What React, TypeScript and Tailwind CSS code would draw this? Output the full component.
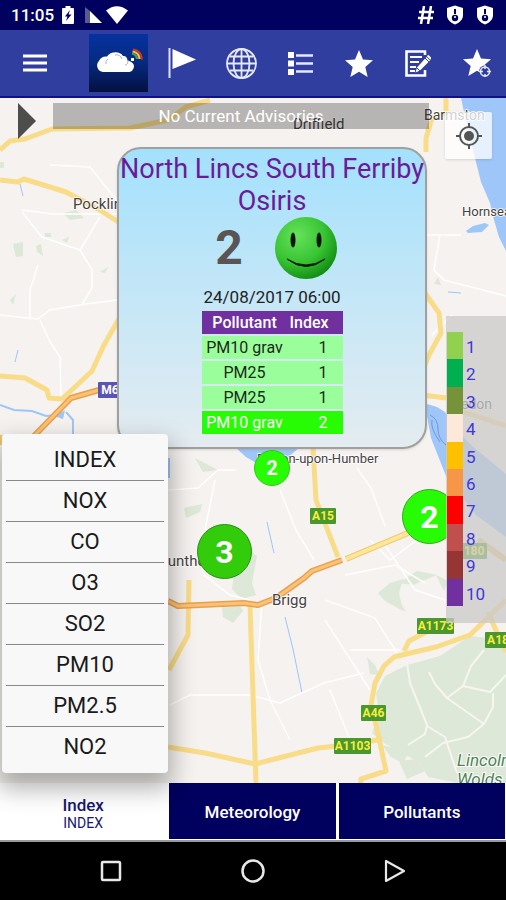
import React from 'react';

interface Reading {
  pollutant: string;
  index: number;
}

const readings: Reading[] = [
  { pollutant: 'PM10 grav', index: 1 },
  { pollutant: 'PM25', index: 1 },
  { pollutant: 'PM25', index: 1 },
  { pollutant: 'PM10 grav', index: 2 },
];

const pollutantOptions = ['INDEX', 'NOX', 'CO', 'O3', 'SO2', 'PM10', 'PM2.5', 'NO2'];

const legend = [
  'bg-[#92d050]',
  'bg-[#00b050]',
  'bg-[#76933c]',
  'bg-[#fde9d9]',
  'bg-[#ffc000]',
  'bg-[#f79646]',
  'bg-[#ff0000]',
  'bg-[#c0504d]',
  'bg-[#963634]',
  'bg-[#7030a0]',
];

const ShieldIcon: React.FC = () => (
  <svg className="w-[18px] h-5" viewBox="0 0 18 20" aria-hidden="true">
    <path d="M9 .5 17 3v7.5c0 4-3.6 7.200-8 9-4.400-1.800-8-5-8-9V3z" fill="#fff" />
    <path d="M9 4v5" stroke="#00005e" strokeWidth="2" />
    <circle cx="9" cy="13" r="3.200" fill="#00005e" />
    <circle cx="9" cy="12" r="1" fill="#fff" />
  </svg>
);

const StatusBar: React.FC = () => (
  <div className="h-[30px] bg-[#00005e] text-white flex items-center justify-between pl-[11px] pr-3">
    <div className="flex items-center">
      <span className="text-[17px] font-medium leading-5">11:05</span>
      <svg className="ml-2 w-3 h-[18px]" viewBox="0 0 12 18" aria-hidden="true">
        <path d="M3.500 0h5v2H11q1 0 1 1v14q0 1-1 1H1q-1 0-1-1V3q0-1 1-1h2.500z" fill="#fff" />
        <path d="M8 4 3 10.500h2.500L4 15l5.500-6.500H6.500z" fill="#00005e" />
      </svg>
      <svg className="ml-2.5 w-[18px] h-[18px]" viewBox="0 0 18 18" aria-hidden="true">
        <path d="M1 1v16h5V5z" fill="#fff" opacity=".35" />
        <path d="M6 5v12h12z" fill="#fff" />
      </svg>
      <svg className="ml-1 w-[22px] h-[18px]" viewBox="0 0 22 18" aria-hidden="true">
        <path d="M0 4.500Q11-4 22 4.500L11 18z" fill="#fff" />
      </svg>
    </div>
    <div className="flex items-center gap-3">
      <svg className="w-4 h-[18px]" viewBox="0 0 16 18" fill="none" stroke="#fff" strokeWidth="2.500" aria-hidden="true">
        <path d="M6 0 3 18M13 0l-3 18M1 6h15M0 12h15" />
      </svg>
      <ShieldIcon />
      <ShieldIcon />
    </div>
  </div>
);

const starPath = 'M14 0l4 9.500 10 .8-7.700 6.700 2.400 10L14 21.700 5.300 27l2.400-10L0 10.300l10-.8z';

const Toolbar: React.FC = () => (
  <header className="h-[68px] bg-[#303f9f] border-b-2 border-[#10108a] flex items-center">
    <button aria-label="Menu" className="w-[89px] h-full pl-[23px] shrink-0">
      <svg className="w-6 h-[18px]" viewBox="0 0 24 18" stroke="#fff" strokeWidth="3" aria-hidden="true">
        <path d="M0 2h24M0 9h24M0 16h24" />
      </svg>
    </button>
    <button aria-label="Home" className="w-[59px] h-[58px] shrink-0 bg-linear-to-b from-[#0632a0] via-[#052a80] to-[#041040]">
      <svg className="size-full" viewBox="0 0 59 58" aria-hidden="true">
        <path d="M14 38a6.500 6.500 0 0 1-4-11q2-5 8-4.500c3-5 13-6 16-.5q4-.5 4.500 4.500l3 1q5 3 3 7-1 3-4 3.500z" fill="#fff" />
        <path d="M26 21q5-1 7 4M19 25q-3 2-2 5M36 31q3 0 3-5" fill="none" stroke="#a9b1c0" />
        <g fill="none" strokeWidth="2.200">
          <path d="M44 15.500q8 1 9 10" stroke="#d8302c" />
          <path d="M43.500 17.500q6.500 1 7 7.500" stroke="#f0c23a" />
          <path d="M43 19.500q4.500 1 5 5.500" stroke="#3fa64d" />
        </g>
        <path d="M42 24h3v3h-3z" fill="#fff" />
      </svg>
    </button>
    <nav className="flex-1 h-full flex pl-[5px]">
      <button aria-label="Flag" className="flex-1 flex items-center justify-center">
        <svg className="w-7 h-[30px]" viewBox="0 0 28 30" aria-hidden="true">
          <path d="M1.500 0v30" stroke="#dfe3f5" strokeWidth="2" />
          <path d="M4.500 1 28 11.500 4.500 21z" fill="#fff" />
        </svg>
      </button>
      <button aria-label="Globe" className="flex-1 flex items-center justify-center">
        <svg className="size-[31px]" viewBox="0 0 31 31" fill="none" stroke="#e6e9f8" strokeWidth="1.800" aria-hidden="true">
          <circle cx="15.500" cy="15.500" r="14.500" />
          <ellipse cx="15.500" cy="15.500" rx="8" ry="14.500" />
          <path d="M15.500 1v29M1 15.500h29M4 8.500h23M4 22.500h23" />
        </svg>
      </button>
      <button aria-label="List" className="flex-1 flex items-center justify-center">
        <svg className="w-[25px] h-[23px]" viewBox="0 0 25 23" aria-hidden="true">
          <path d="M8 3.500h17M8 11.500h17M8 19.500h17" stroke="#e6e9f8" strokeWidth="2.400" />
          <path d="M0 0h6v6H0zM0 8.500h6v6H0zM0 17h6v6H0z" fill="#fff" />
        </svg>
      </button>
      <button aria-label="Favourites" className="flex-1 flex items-center justify-center">
        <svg className="w-7 h-[27px]" viewBox="0 0 28 27" aria-hidden="true">
          <path d={starPath} fill="#fff" />
        </svg>
      </button>
      <button aria-label="Notes" className="flex-1 flex items-center justify-center">
        <svg className="w-[26px] h-[27px]" viewBox="0 0 26 27" fill="none" aria-hidden="true">
          <path d="M20 5V1.500H1.500v24H20V20" stroke="#fff" strokeWidth="2.600" />
          <path d="M5 7h12M5 12h9M5 17h6M5 21h5" stroke="#fff" strokeWidth="2" />
          <path d="m10.500 22.500 1.500-5L21.500 7l3.500 3.500-10 10z" fill="#fff" />
          <path d="m20 8 4 4M12 18l3 3" stroke="#303f9f" strokeWidth="1" />
          <path d="m22.500 5.500 3.500 3.500" stroke="#fff" strokeWidth="2" />
        </svg>
      </button>
      <button aria-label="Add favourite" className="flex-1 flex items-center justify-center">
        <svg className="w-7 h-[28px]" viewBox="0 0 28 28" aria-hidden="true">
          <path d={starPath} fill="#fff" />
          <circle cx="22" cy="22.500" r="6" fill="#303f9f" />
          <circle cx="22" cy="22.500" r="4.500" fill="none" stroke="#e6e9f8" strokeWidth="1.500" />
          <path d="M22 16v4M22 25v3M16 22.500h4M24 22.500h4" stroke="#e6e9f8" strokeWidth="1.500" />
        </svg>
      </button>
    </nav>
  </header>
);

const RoadSign: React.FC<{ x: number; y: number; w: number; label: string; motorway?: boolean }> = ({ x, y, w, label, motorway }) => (
  <g>
    <rect x={x} y={y} width={w} height="16" rx="1" fill={motorway ? '#5a55b5' : '#4a962f'} />
    <text x={x + w / 2} y={y + 12} textAnchor="middle" fontSize="12" fontWeight="700" fill={motorway ? '#fff' : '#f7ee3c'}>
      {label}
    </text>
  </g>
);

const MapCanvas: React.FC = () => (
  <svg className="absolute inset-0 size-full" viewBox="0 98 506 685" preserveAspectRatio="xMinYMin slice" aria-label="Map">
    <path d="M0 98h506v685H0z" fill="#f5f2ef" />

    {/* water */}
    <g fill="#9fc6f8">
      <path d="M461 98l3 14 9 38 8 32 9 21 4 17 5 17 7 14V98z" />
      <path d="M466 231l7-5 12-3 4 2-7 7-14 1z" />
      <path d="M427 404l10 3 8 5 10 16 16 17 35 29v63l-30-22-30-39-15-38-4-22z" />
      <path d="M236 448l10 9 12 7h22l20-17z" />
      <path d="M54 416l11-6-2 9z" />
      <path d="M160 458h10v20h-10z" />
    </g>
    <g fill="none" stroke="#9fc6f8">
      <path d="M0 405l14 5 18 1 14 5 10-1M66 412l7 8v18" strokeWidth="2" />
      <path d="M20 184l3 12M18 350l-3 12M448 292l13 1M267 522l7 31M285 617l8 32 9 44M495 655l11-4" strokeWidth="1" />
      <path d="M430 415q8 4 8 14t8 16M432 420q-2 8 8 22" stroke="#6f98d8" />
    </g>

    {/* woodland */}
    <g fill="#dde8d8">
      <path d="M385 676l22-11 33-9 30-20 36 4v143h-48l-30-6-8-14-14-8-22-12-12-10 7-20-3-20z" />
      <path d="M382 745l22 5 8-3-9 16-12-6zM399 761l18-2 8 12-18 8z" />
      <path d="M367 657l8 8 4 10-9-1z" />
      <path d="M234 575l15-25 8 6-5 27 4 12-14 4-10-10zM222 606l17-3 4 8-10 12-10-6z" />
      <path d="M184 508l18-4-2 8-14 6zM195 458l8 14 15-2M378 593l12-10 13-4-4 14 4 18-18-10z" />
      <path d="M63 213l13-3 8 8-14 2zM13 244l10-2v14l-7 1zM36 246l5-2 2 12-6-4zM434 284l4-7 3 8z" />
      <path d="M45 233h6v4h-6zM62 240l7-3-2 6zM100 272l8-5-3 6zM10 300l6-6-3 11zM0 162h4v6H0z" />
      <path d="M399 583l18-12 20 4-24 10zM436 575l12 6-4 10zM386 598l10-4 10 18z" />
    </g>

    {/* minor roads */}
    <g fill="none" stroke="#fff" strokeWidth="1.500">
      <path d="M0 315l38 4 12-9 36-6 31-4M40 320l10 22 10 15 1 40M50 165l40 2 40 50M22 210l30 4h70M22 212l20 25 38 13 20-33M80 250l12 20v18l-10 16M30 320l0-30 8-25" />
      <path d="M423 235h38M440 235l-6 35 10 10 62 16M432 335l20-20" />
      <path d="M357 468l14 20 14 38M280 490l16 40 18 30M168 490l30-2 20-18 18 0M205 530l10-50" />
      <path d="M204 575l26 20 20 5M325 600l50 18 22 35M262 600l-4 60 12 40 20 40M170 705l20-10 60 0 30 8 44-20 40-10M330 690l20 50 14 14M350 650h50M325 620l45 70" />
      <path d="M370 540l20 20 40-30M385 545l30 45 30 10M345 575l50-10 30 18" />
    </g>
    <g fill="none" stroke="#f6f6ee" strokeWidth="2" strokeLinejoin="round">
      <path d="M407 663l3 20 17 42-2 9-17 11M427 726l18 11 12 36M429 672l6 12 12 14 37 26 9-17v-14M447 698l16-12 8-20 13-16M463 686l27 6 16-17M484 724l-16 13-25 6-18 14" />
    </g>

    {/* yellow main roads */}
    <g fill="none" strokeLinejoin="round">
      <path
        d="M0 150l10-9 15-2 27-10 78-1 38-8 18-13 24-7M0 180l18 2 6-3 42 13 32 17 22 14M0 376l25 2 22 12 2 8 13 1 13-12 17-16 12-26 16-28M446 98v15l-14 5-6 20v14M425 293l14 20 2 20-12 22-5 12M422 395l24 3M313 448l3 52 22 57M464 412l42 14M488 612l6 14 12 26M506 600l-36 35-34 12-30 7-12 3-10 9-9 17-4 22 6 24 9 42-25 8-1 16M189 580l-1 55-19 35M250 605l6 178M168 747l37 6 50 11 63-16 38-4 26-5M404 651l5-10 27-14"
        stroke="#f9dc88"
        strokeWidth="5"
      />
      <path d="M346 559l62-26M478 540l28 20M0 445v-10" stroke="#f2c873" strokeWidth="6" />
      <path d="M346 559l62-26" stroke="#fbe79a" strokeWidth="4" />
      <path d="M34 436l37-38 28-8M168 601l10 5 66-3 14 2 18-7 28-20 8-7 30-11" stroke="#e9a04d" strokeWidth="6" />
      <path d="M34 436l37-38 28-8M168 601l10 5 66-3 14 2 18-7 28-20 8-7 30-11" stroke="#f9c277" strokeWidth="3" />
    </g>

    <RoadSign x={98} y={382} w={24} label="M6" motorway />
    <RoadSign x={310} y={508} w={26} label="A15" />
    <RoadSign x={417} y={618} w={37} label="A1173" />
    <RoadSign x={485} y={632} w={26} label="A18" />
    <RoadSign x={361} y={705} w={25} label="A46" />
    <RoadSign x={334} y={738} w={37} label="A1103" />
    <RoadSign x={461} y={543} w={26} label="180" />

    <g fill="#45413f" stroke="#fff" strokeWidth="1.500" paintOrder="stroke" fontSize="15">
      <text x="73" y="209">Pocklington</text>
      <text x="293" y="129">Driffield</text>
      <text x="424" y="120" fontSize="14">Barmston</text>
      <text x="462" y="216" fontSize="13">Hornsea</text>
      <text x="257" y="463" fontSize="13">Barton-upon-Humber</text>
      <text x="151" y="566">Scunthorpe</text>
      <text x="272" y="605">Brigg</text>
      <text x="451" y="409" fontSize="14">Hedon</text>
    </g>
    <g fill="#4f7f55" stroke="#fff" strokeWidth="2" paintOrder="stroke" fontSize="17" fontStyle="italic">
      <text x="457" y="766">Lincolnshire</text>
      <text x="457" y="785">Wolds</text>
    </g>
  </svg>
);

const SmileyFace: React.FC = () => (
  <svg className="size-[62px]" viewBox="0 0 62 62" role="img" aria-label="Low pollution">
    <defs>
      <radialGradient id="face" cx=".36" cy=".3" r=".8">
        <stop offset="0" stopColor="#66e25c" />
        <stop offset=".55" stopColor="#38c432" />
        <stop offset="1" stopColor="#0a800e" />
      </radialGradient>
    </defs>
    <circle cx="31" cy="31" r="31" fill="url(#face)" />
    <ellipse cx="18" cy="23" rx="2.500" ry="7.500" fill="#071507" />
    <ellipse cx="44" cy="23" rx="2.500" ry="7.500" fill="#071507" />
    <path d="M12 42q19 15 38 0-19 12-38 0z" fill="#071507" stroke="#071507" strokeLinejoin="round" />
  </svg>
);

const StationCard: React.FC = () => (
  <section className="absolute top-[49px] left-[117px] right-[79px] h-[302px] rounded-3xl border-2 border-[#a0a0a0] bg-linear-to-b from-[#a3e1fd] to-[#e4ecf0] flex flex-col items-center shadow-sm">
    <h1 className="mt-1 text-[27px] leading-8 text-[#6a1b9a] text-center whitespace-nowrap">
      North Lincs South Ferriby
      <br />
      Osiris
    </h1>
    <div className="flex items-center gap-8 pl-2">
      <span className="w-7 text-5xl font-bold text-[#595555] text-center">2</span>
      <SmileyFace />
    </div>
    <p className="mt-1.5 text-[17px] leading-6 text-[#222]">24/08/2017 06:00</p>
    <table className="w-[141px] table-fixed border-separate border-spacing-x-0 border-spacing-y-[2px] text-base leading-[23px] text-[#1c2a1c] text-center">
      <thead>
        <tr className="bg-[#7030a0] text-white">
          <th className="w-[86px] p-0 font-medium">Pollutant</th>
          <th className="p-0 pr-3 font-medium">Index</th>
        </tr>
      </thead>
      <tbody>
        {readings.map((reading, i) => (
          <tr key={i} className={reading.index > 1 ? 'bg-[#28fc04] text-white' : 'bg-[#9aff9a]'}>
            <td className="p-0 whitespace-nowrap">{reading.pollutant}</td>
            <td className="p-0 pl-4">
              <span>{reading.index}</span>
            </td>
          </tr>
        ))}
      </tbody>
    </table>
  </section>
);

const App: React.FC = () => (
  <div className="min-h-screen flex flex-col bg-black font-['Roboto','Noto_Sans',sans-serif]">
    <StatusBar />
    <Toolbar />

    <main className="relative z-10 flex-1 min-h-[685px]">
      <div className="absolute inset-0 overflow-hidden">
        <MapCanvas />

        <button aria-label="Play" className="absolute top-[5px] left-[18px]">
          <svg className="w-[18px] h-9" viewBox="0 0 18 36" aria-hidden="true">
            <path d="M0 0l18 18L0 36z" fill="#4d4d4d" />
          </svg>
        </button>
        <p className="absolute top-[5px] left-[53px] right-[77px] h-[26px] bg-black/25 text-white text-[17px] leading-[27px] text-center">
          No Current Advisories
        </p>
        <button aria-label="My location" className="absolute top-[14px] right-[14px] size-[47px] rounded-xs bg-white/75 shadow flex items-center justify-center">
          <svg className="size-[26px]" viewBox="0 0 26 26" fill="none" stroke="#555" strokeWidth="2" aria-hidden="true">
            <circle cx="13" cy="13" r="9" />
            <circle cx="13" cy="13" r="5" fill="#555" stroke="none" />
            <path d="M13 0v5M13 21v5M0 13h5M21 13h5" />
          </svg>
        </button>

        <StationCard />

        <button className="absolute top-[352px] left-[254px] size-9 rounded-full bg-[#28fc04] border border-[#35c51c] text-white text-xl leading-none font-bold">2</button>
        <button className="absolute top-[426px] left-[197px] size-[55px] rounded-full bg-[#33cc0a] border border-[#258f12] text-white text-[32px] leading-none font-bold">3</button>
        <button className="absolute top-[391px] left-[402px] size-[55px] rounded-full bg-[#28fc04] border border-[#35a51c] text-white text-[32px] leading-none font-bold">2</button>

        <aside className="absolute top-[218px] right-0 w-[60px] h-[307px] pt-4 bg-[#cacaca]/75">
          <ol className="grid grid-rows-10 h-[274px] pl-px">
            {legend.map((color, i) => (
              <li key={color} className="flex items-center">
                <span className={`w-4 h-full ${color}`} />
                <span className="pl-[3px] pt-1 text-[17px] text-[#4136dc]">{i + 1}</span>
              </li>
            ))}
          </ol>
        </aside>
      </div>

      <ul className="absolute bottom-[10px] left-[2px] w-[166px] px-1 py-[6px] rounded-sm bg-[#f8f8f8] shadow-[0_12px_24px_4px_rgba(0,0,0,0.3)] divide-y divide-[#888]">
        {pollutantOptions.map((option) => (
          <li key={option}>
            <button className="w-full h-10 text-[22px] leading-10 text-[#1a1a1a]">{option}</button>
          </li>
        ))}
      </ul>
    </main>

    <div className="h-[59px] bg-white border-b-2 border-[#9a9a9a] flex gap-[3px] pr-px pb-px">
      <button className="flex-1 pt-1 text-[#17176e] flex flex-col items-center justify-center">
        <span className="text-[17px] leading-5 font-medium">Index</span>
        <span className="text-sm leading-4">INDEX</span>
      </button>
      <button className="flex-1 pt-1 bg-[#00005e] text-white text-[17px] font-medium">Meteorology</button>
      <button className="flex-1 pt-1 bg-[#00005e] text-white text-[17px] font-medium">Pollutants</button>
    </div>

    <nav className="h-[58px] flex justify-center">
      <button aria-label="Recent" className="w-[142px] flex items-center justify-center">
        <svg className="size-6" viewBox="0 0 24 24" fill="none" stroke="#e8e8e8" strokeWidth="2.500" aria-hidden="true">
          <rect x="3" y="3" width="18" height="18" rx="1" />
        </svg>
      </button>
      <button aria-label="Home screen" className="w-[142px] flex items-center justify-center">
        <svg className="size-6" viewBox="0 0 24 24" fill="none" stroke="#e8e8e8" strokeWidth="2.500" aria-hidden="true">
          <circle cx="12" cy="12" r="10.500" />
        </svg>
      </button>
      <button aria-label="Back" className="w-[142px] flex items-center justify-center">
        <svg className="size-6" viewBox="0 0 24 24" fill="none" stroke="#e8e8e8" strokeWidth="2.200" strokeLinejoin="round" aria-hidden="true">
          <path d="M3 2v20l18-10z" />
        </svg>
      </button>
    </nav>
  </div>
);

export default App;
